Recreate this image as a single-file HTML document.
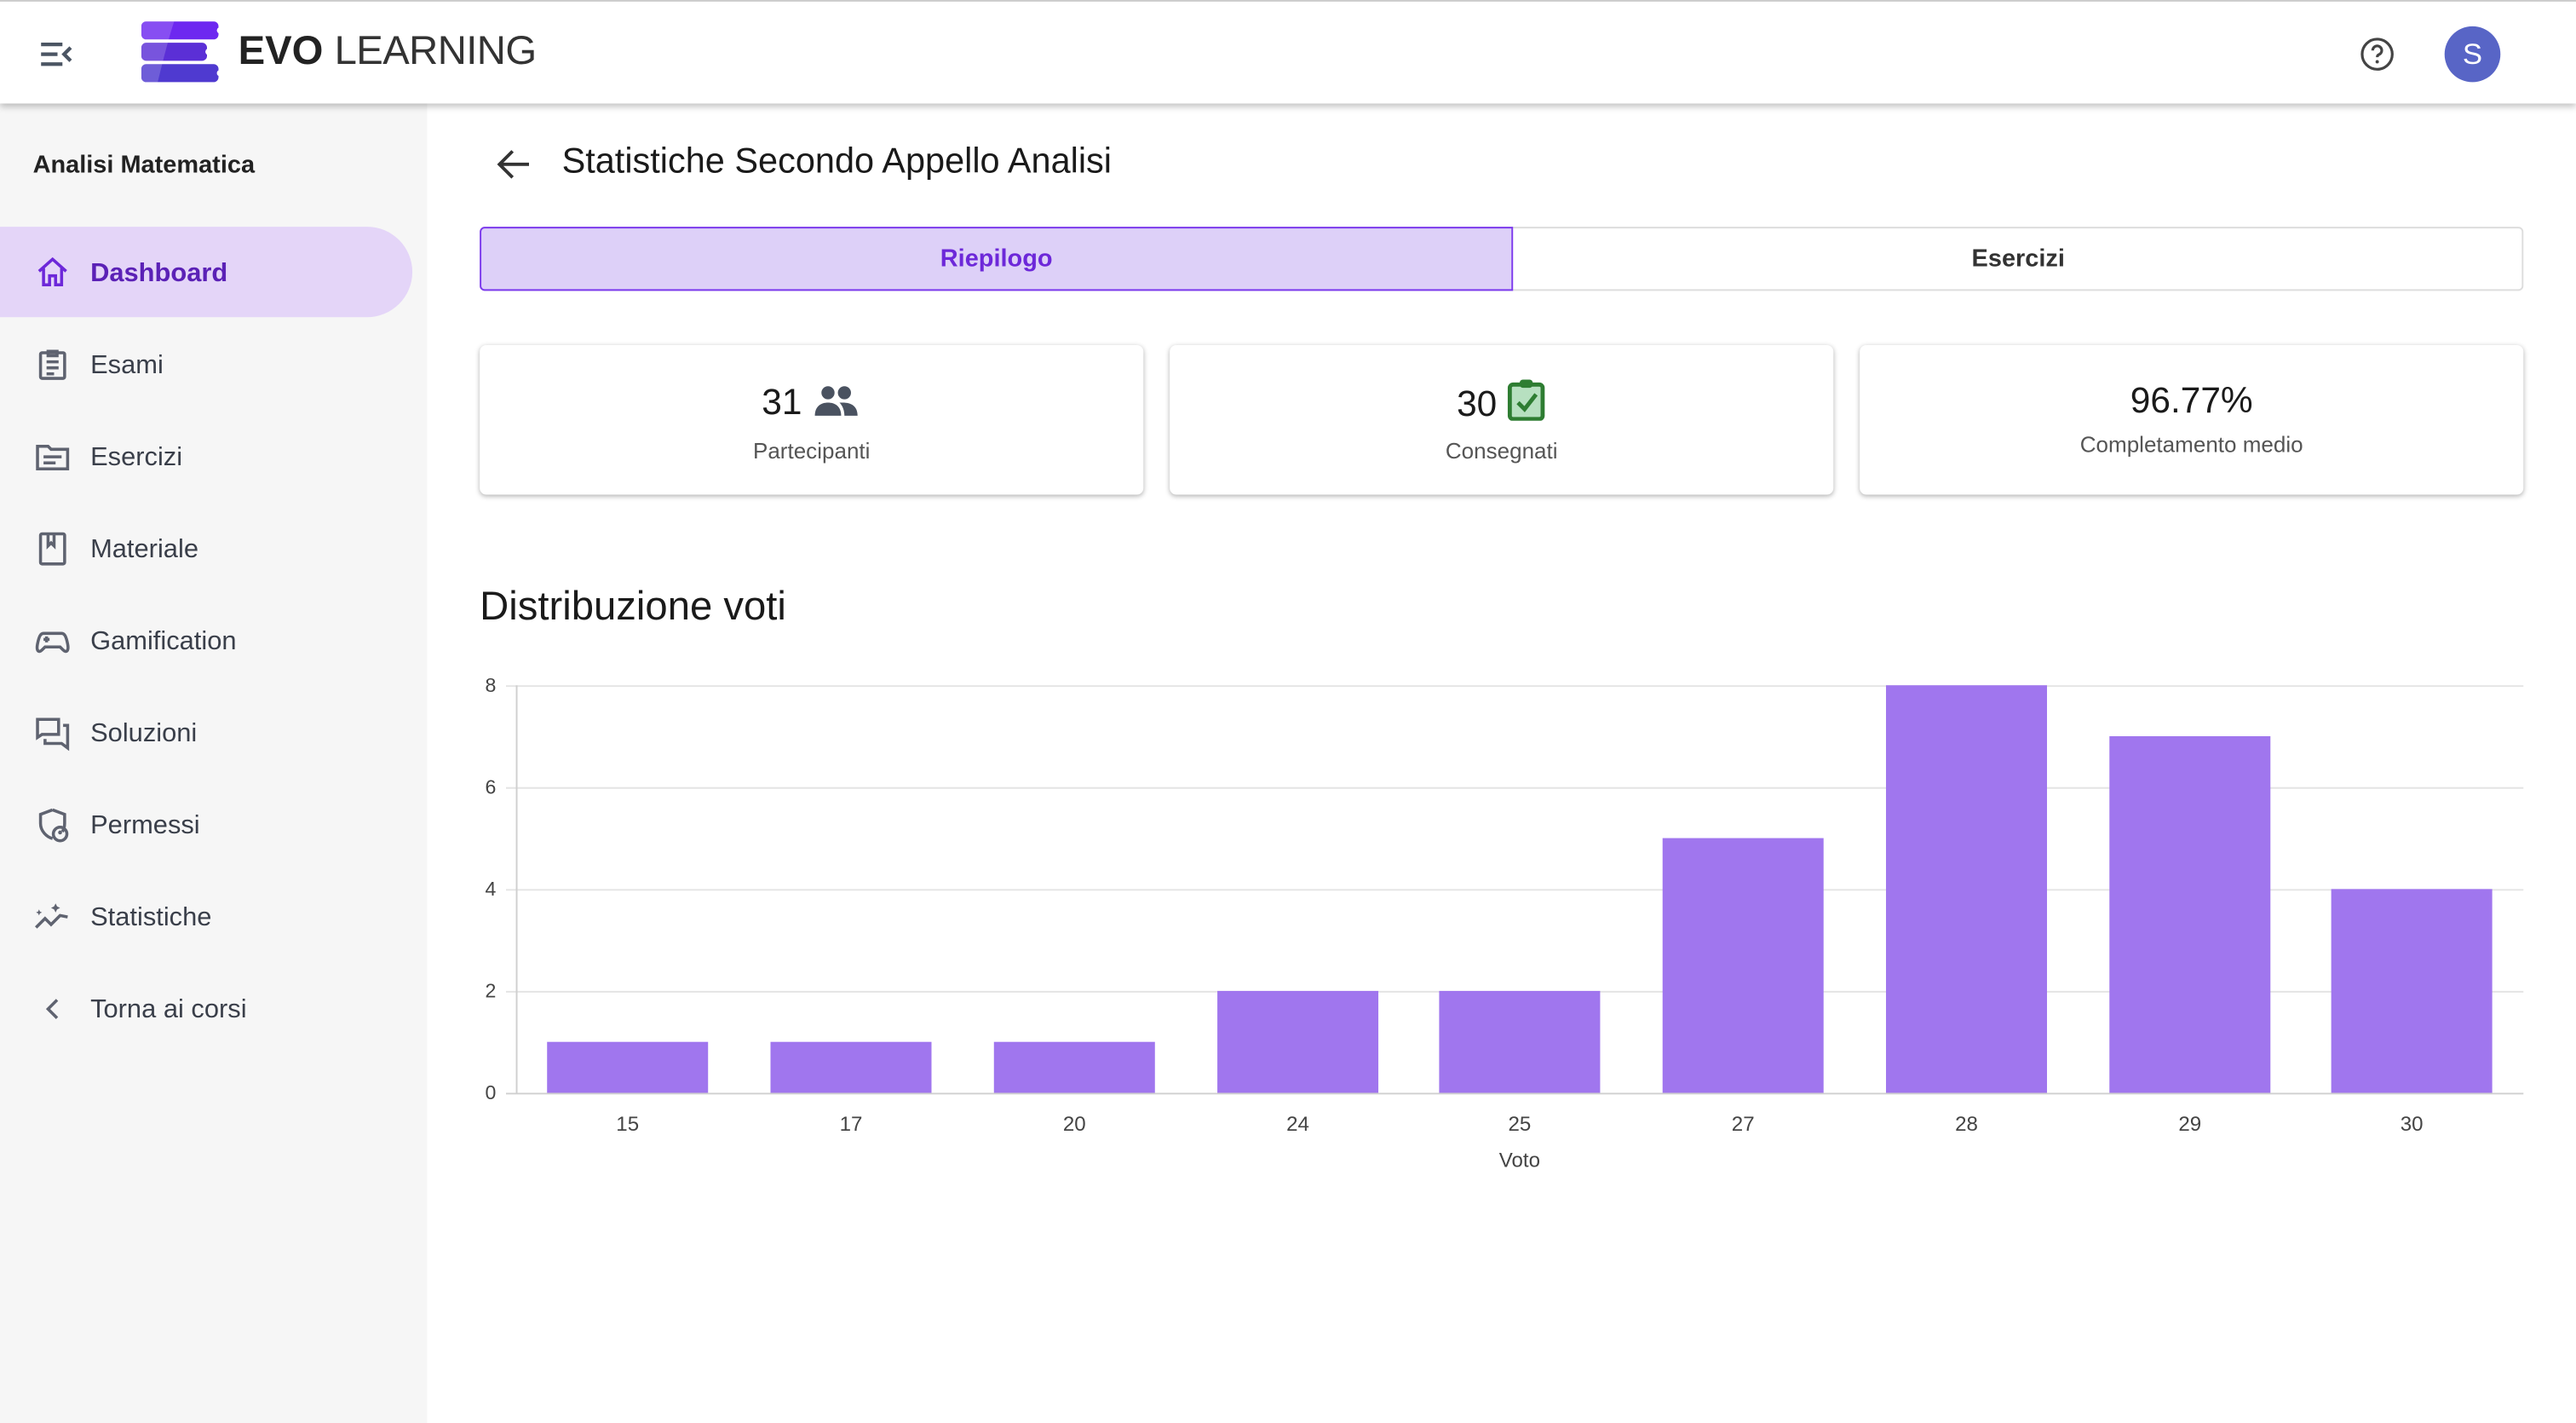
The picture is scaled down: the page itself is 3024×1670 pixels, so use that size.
<!DOCTYPE html>
<html><head><meta charset="utf-8"><style>
html,body{margin:0;padding:0;width:3024px;height:1670px;overflow:hidden;background:#fff;font-family:"Liberation Sans",sans-serif}
#w{position:absolute;left:0;top:0;width:1568px;height:866px;transform:scale(1.92857);transform-origin:0 0;background:#fff}
.a{position:absolute}
.hdr{left:0;top:0;width:1568px;height:63px;background:#fff;border-top:1px solid #ccc;box-shadow:0 2px 4px rgba(0,0,0,.25);z-index:2;box-sizing:border-box}
.side{left:0;top:63px;width:260px;height:803px;background:#f6f6f6}
.item{position:absolute;left:0;width:251px;height:55px;line-height:57px;font-size:16px;color:#3a3f4a}
.item span{position:absolute;left:55px}
.item svg{position:absolute;left:21px;top:17px}
.card{background:#fff;border-radius:4px;box-shadow:0 1px 3px rgba(0,0,0,.3);height:91px;width:404px;top:210px;text-align:center}
.card .n{position:absolute;left:0;right:0;top:22px;font-size:22px;color:#1a1a1a}
.card .l{position:absolute;left:0;right:0;top:57px;font-size:13.5px;color:#555}
</style></head><body><div id="w">
<div class="a hdr">
<svg class="a" style="left:24px;top:24px" width="22" height="16" viewBox="0 0 22 16"><g stroke="#4b5563" stroke-width="2.2" fill="none"><path d="M1 2h13M1 8h10M1 14h13M19 4l-4 4 4 4"/></g></svg>
<svg class="a" style="left:86px;top:12px" width="48" height="38" viewBox="0 0 48 38"><rect x="0" y="0" width="47" height="11" rx="3" fill="#6d28f0"/><rect x="0" y="13" width="40" height="11" rx="3" fill="#5b2fd6"/><rect x="0" y="26" width="47" height="11" rx="3" fill="#4f3ad0"/><path d="M0 3q0-3 3-3h17q-4 12-10 37H3q-3 0-3-3z" fill="#fff" opacity=".18"/><circle cx="48" cy="5.5" r="2" fill="#fff"/><circle cx="41" cy="18.5" r="2" fill="#fff"/><circle cx="48" cy="31.5" r="2" fill="#fff"/></svg>
<div class="a" style="left:145px;top:17px;font-size:24.5px;color:#222;white-space:nowrap"><b style="font-weight:700">EVO</b> <span style="font-weight:300;color:#333;letter-spacing:-.3px">LEARNING</span></div>
<svg class="a" style="left:1436px;top:21px" width="22" height="22" viewBox="0 0 24 24"><circle cx="12" cy="12" r="10" fill="none" stroke="#444" stroke-width="1.8"/><path d="M9 9.5a3 3 0 1 1 4 2.8c-.8.4-1 .9-1 1.7" fill="none" stroke="#444" stroke-width="1.8"/><circle cx="12" cy="17" r="1.1" fill="#444"/></svg>
<div class="a" style="left:1488px;top:15px;width:34px;height:34px;border-radius:50%;background:#5865c6;color:#fff;font-size:18px;line-height:34px;text-align:center">S</div>
</div>
<div class="a side">
<div class="a" style="left:20px;top:29px;font-size:15px;font-weight:bold;color:#222">Analisi Matematica</div>
<div class="item" style="top:75px;background:#e4d5f8;border-radius:0 28px 28px 0;color:#5b21b6;font-weight:bold"><svg width="22" height="22" viewBox="0 0 24 24"><path d="M3 11l9-8 9 8M6 9v11h4v-6h4v6h4V9" fill="none" stroke="#6d28d9" stroke-width="2"/></svg><span>Dashboard</span></div>
<div class="item" style="top:131px"><svg width="22" height="22" viewBox="0 0 24 24"><g fill="none" stroke="#5f6370" stroke-width="2"><rect x="4" y="4" width="16" height="17" rx="1"/><path d="M9 3h6v3H9zM8 10h8M8 14h8M8 18h5"/></g></svg><span>Esami</span></div>
<div class="item" style="top:187px"><svg width="22" height="22" viewBox="0 0 24 24"><g fill="none" stroke="#5f6370" stroke-width="2"><path d="M2 5h7l2 2h11v13H2z"/><path d="M6 12h12M6 16h8"/></g></svg><span>Esercizi</span></div>
<div class="item" style="top:243px"><svg width="22" height="22" viewBox="0 0 24 24"><g fill="none" stroke="#5f6370" stroke-width="2"><rect x="4" y="2" width="16" height="20" rx="1"/><path d="M9 2v8l2-2 2 2V2"/></g></svg><span>Materiale</span></div>
<div class="item" style="top:299px"><svg width="22" height="22" viewBox="0 0 24 24"><g fill="none" stroke="#5f6370" stroke-width="2"><path d="M6 7h12c2 0 3 2 4 7s-1 6-3 4l-2-2H7l-2 2c-2 2-4 1-3-4S4 7 6 7z"/><path d="M6 11h4M8 9v4"/></g></svg><span>Gamification</span></div>
<div class="item" style="top:355px"><svg width="22" height="22" viewBox="0 0 24 24"><g fill="none" stroke="#5f6370" stroke-width="2"><path d="M2 3h14v10H5l-3 2z"/><path d="M19 7h3v15l-4-3H7v-3"/></g></svg><span>Soluzioni</span></div>
<div class="item" style="top:411px"><svg width="22" height="22" viewBox="0 0 24 24"><g fill="none" stroke="#5f6370" stroke-width="2"><path d="M12 2l8 3v6c0 2-.5 4-1.5 5.5M12 2L4 5v6c0 5 4 9 8 10"/><circle cx="17" cy="18" r="4.5"/></g><circle cx="17" cy="17" r="1.3" fill="#5f6370"/></svg><span>Permessi</span></div>
<div class="item" style="top:467px"><svg width="22" height="22" viewBox="0 0 24 24"><g fill="none" stroke="#5f6370" stroke-width="2"><path d="M1 19l6-6 4 4 6-6 5 1"/></g><path d="M14 3l1 2 2 1-2 1-1 2-1-2-2-1 2-1zM3 7l.6 1.4L5 9l-1.4.6L3 11l-.6-1.4L1 9l1.4-.6z" fill="#5f6370"/></svg><span>Statistiche</span></div>
<div class="item" style="top:523px"><svg width="22" height="22" viewBox="0 0 24 24"><path d="M15 6l-6 6 6 6" fill="none" stroke="#5f6370" stroke-width="2"/></svg><span>Torna ai corsi</span></div>
</div>
<svg class="a" style="left:302px;top:90px" width="22" height="20" viewBox="0 0 22 20"><path d="M20 10H3M10 2l-8 8 8 8" fill="none" stroke="#333" stroke-width="2"/></svg>
<div class="a" style="left:342px;top:86px;font-size:21.5px;color:#1a1a1a">Statistiche Secondo Appello Analisi</div>
<div class="a" style="left:292px;top:138px;width:1244px;height:39px;border:1px solid #ddd;border-radius:3px;box-sizing:border-box"></div>
<div class="a" style="left:292px;top:138px;width:629px;height:39px;border:1px solid #7c3aed;background:#ddd0f8;box-sizing:border-box;border-radius:3px 0 0 3px;text-align:center;line-height:37px;font-size:15px;font-weight:bold;color:#6d28d9">Riepilogo</div>
<div class="a" style="left:921px;top:138px;width:615px;height:39px;text-align:center;line-height:39px;font-size:15px;font-weight:bold;color:#333">Esercizi</div>
<div class="a card" style="left:292px"><div class="n">31 <svg width="30" height="20" viewBox="0 0 30 20" style="vertical-align:-2px"><circle cx="10" cy="5" r="4" fill="#4a5260"/><circle cx="20" cy="5" r="4" fill="#4a5260"/><path d="M2 19c0-6 4-8 8-8s8 2 8 8z" fill="#4a5260"/><path d="M19 11c5 0 9 2 9 8h-8c0-3-1-6-3-8z" fill="#4a5260"/></svg></div><div class="l">Partecipanti</div></div>
<div class="a card" style="left:712px"><div class="n" style="top:20px">30 <svg width="24" height="26" viewBox="0 0 24 26" style="vertical-align:-3px"><rect x="2" y="4" width="20" height="21" rx="2" fill="#b7e0c0" stroke="#2e7d32" stroke-width="2.5"/><rect x="8" y="1" width="8" height="5" rx="2" fill="#2e7d32"/><path d="M7 15l4 4 7-9" fill="none" stroke="#2e7d32" stroke-width="2.5"/></svg></div><div class="l">Consegnati</div></div>
<div class="a card" style="left:1132px"><div class="n" style="top:21px">96.77%</div><div class="l" style="top:53px">Completamento medio</div></div>
<div class="a" style="left:292px;top:356px;font-size:24.5px;color:#1a1a1a">Distribuzione voti</div>
<svg class="a" style="left:0;top:0" width="1568" height="866">
<g stroke="#e4e4e4" stroke-width="1"><path d="M308 417.5H1536M308 479.5H1536M308 541.5H1536M308 603.5H1536"/></g>
<path d="M314.5 417V665M308 665.5H1536" stroke="#cfcfcf"/>
<g font-family="Liberation Sans" font-size="12" fill="#444" text-anchor="end"><text x="302" y="421">8</text><text x="302" y="483">6</text><text x="302" y="545">4</text><text x="302" y="607">2</text><text x="302" y="669">0</text></g>
<g fill="#a076ee">
<rect x="333" y="634" width="98" height="31"/><rect x="469" y="634" width="98" height="31"/><rect x="605" y="634" width="98" height="31"/><rect x="741" y="603" width="98" height="62"/><rect x="876" y="603" width="98" height="62"/><rect x="1012" y="510" width="98" height="155"/><rect x="1148" y="417" width="98" height="248"/><rect x="1284" y="448" width="98" height="217"/><rect x="1419" y="541" width="98" height="124"/></g>
<g font-family="Liberation Sans" font-size="12.5" fill="#444" text-anchor="middle"><text x="382" y="688">15</text><text x="518" y="688">17</text><text x="654" y="688">20</text><text x="790" y="688">24</text><text x="925" y="688">25</text><text x="1061" y="688">27</text><text x="1197" y="688">28</text><text x="1333" y="688">29</text><text x="1468" y="688">30</text><text x="925" y="710">Voto</text></g>
</svg>
</div></body></html>
